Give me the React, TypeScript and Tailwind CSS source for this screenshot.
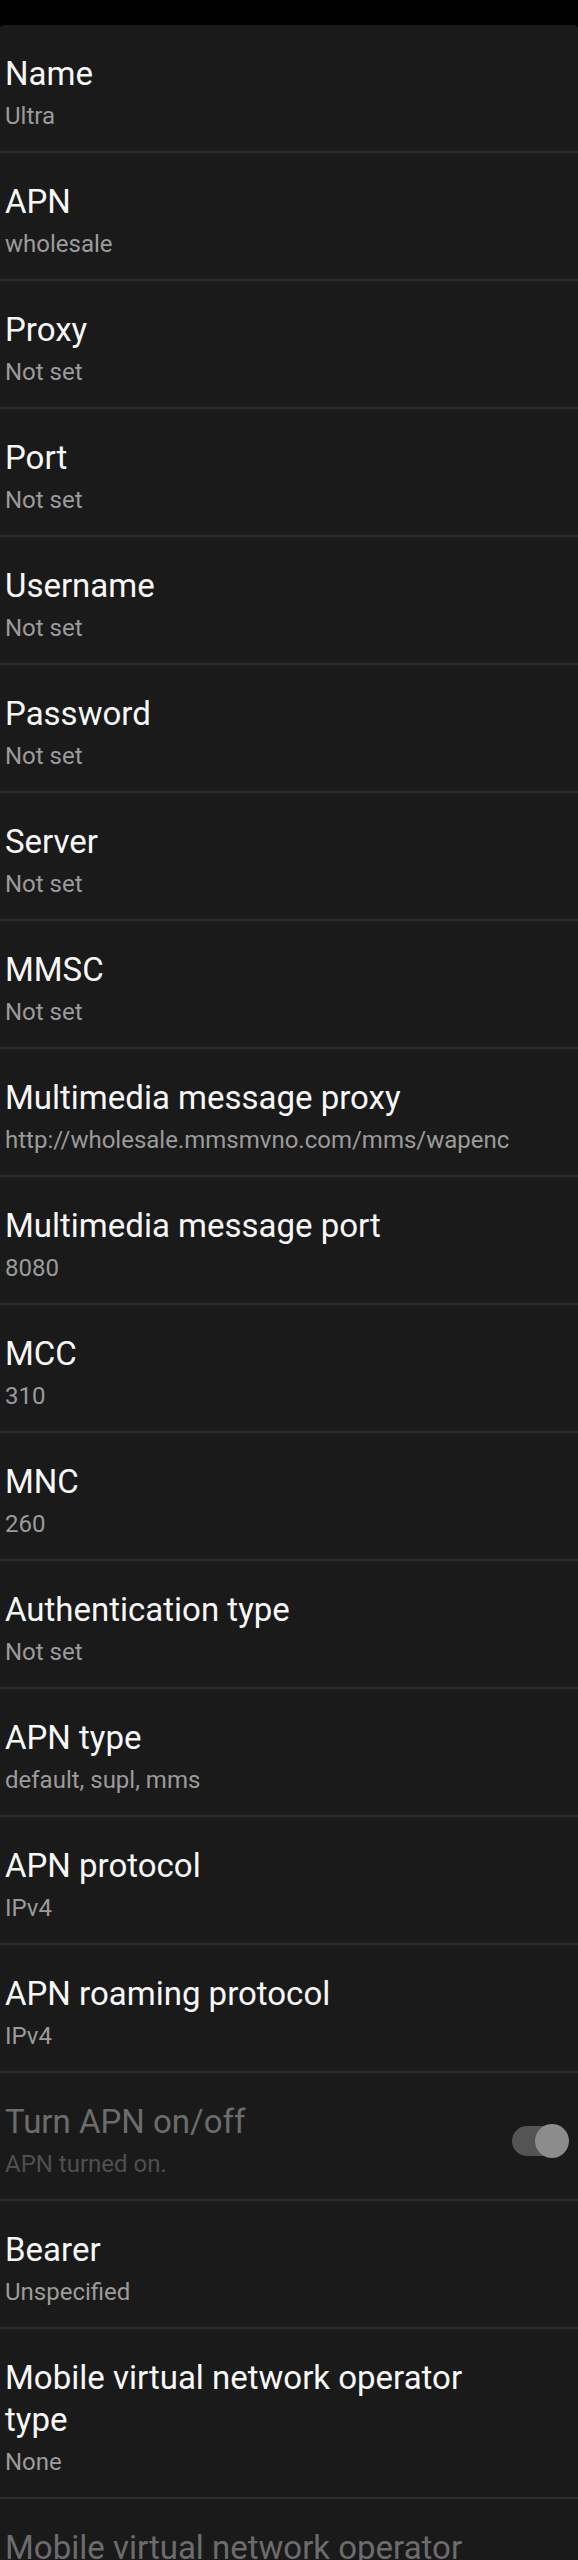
import React from 'react';

type Row = {
    title: string;
    summary?: string;
    disabled?: boolean;
    toggle?: boolean;
};

const ROWS: Row[] = [
    { title: 'Name', summary: 'Ultra' },
    { title: 'APN', summary: 'wholesale' },
    { title: 'Proxy', summary: 'Not set' },
    { title: 'Port', summary: 'Not set' },
    { title: 'Username', summary: 'Not set' },
    { title: 'Password', summary: 'Not set' },
    { title: 'Server', summary: 'Not set' },
    { title: 'MMSC', summary: 'Not set' },
    { title: 'Multimedia message proxy', summary: 'http://wholesale.mmsmvno.com/mms/wapenc' },
    { title: 'Multimedia message port', summary: '8080' },
    { title: 'MCC', summary: '310' },
    { title: 'MNC', summary: '260' },
    { title: 'Authentication type', summary: 'Not set' },
    { title: 'APN type', summary: 'default, supl, mms' },
    { title: 'APN protocol', summary: 'IPv4' },
    { title: 'APN roaming protocol', summary: 'IPv4' },
    { title: 'Turn APN on/off', summary: 'APN turned on.', disabled: true, toggle: true },
    { title: 'Bearer', summary: 'Unspecified' },
    { title: 'Mobile virtual network operator type', summary: 'None' },
    { title: 'Mobile virtual network operator value', summary: 'Not set', disabled: true },
];

function Toggle() {
    return (
        <div className="relative w-[57px] h-[34px] shrink-0 flex items-center">
            <div className="w-[48px] h-[30px] rounded-full bg-[#545454]" />
            <div className="absolute right-0 top-0 w-[34px] h-[34px] rounded-full bg-[#8c8c8c]" />
        </div>
    );
}

function SettingRow({ row }: { row: Row }) {
    return (
        <div className="flex items-center border-b-2 border-[#2c2c2c] pl-[5px] pr-[9px] pt-[28px] pb-[19px]">
            <div className="flex-1 min-w-0">
                {/* titles wrap before the right edge, like the settings list does */}
                <div
                    className={`max-w-[505px] text-[33px] leading-[42px] ${row.disabled ? 'text-[#6c6c6c]' : 'text-[#f7f7f7]'}`}
                >
                    {row.title}
                </div>
                {row.summary && (
                    <div
                        className={`mt-[5px] text-[24px] leading-[32px] whitespace-nowrap ${row.disabled ? 'text-[#4f4f4f]' : 'text-[#9b9b9b]'}`}
                    >
                        {row.summary}
                    </div>
                )}
            </div>
            {row.toggle && <Toggle />}
        </div>
    );
}

export default function App() {
    return (
        <div className="w-[578px] h-[2560px] overflow-hidden bg-black font-['Roboto',_'Liberation_Sans',_sans-serif]">
            <div className="h-[25px] bg-black" />
            <div className="bg-[#1a1a1a] rounded-t-[4px]">
                {ROWS.map((row, i) => (
                    <SettingRow key={i} row={row} />
                ))}
            </div>
        </div>
    );
}
